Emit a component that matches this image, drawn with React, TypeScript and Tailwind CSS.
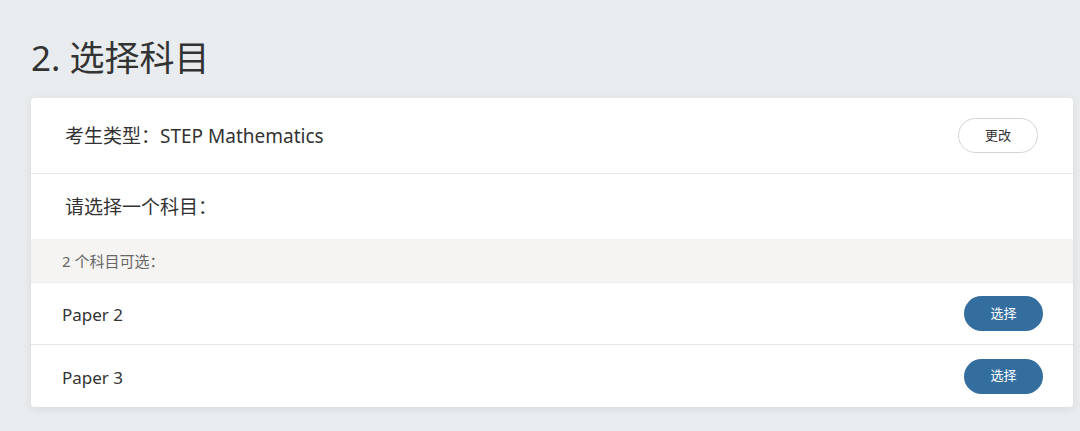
import React from "react";

const papers = ["Paper 2", "Paper 3"];

const App = () => {
  return (
    <div
      className="min-h-screen w-full bg-[#e9ecee] pl-[31px] pr-[7px] pt-[34px] text-[#333]"
      style={{ fontFamily: '"Noto Sans", "Noto Sans CJK SC", sans-serif' }}
    >
      <h1 className="text-[35px] leading-[48px] font-normal text-[#333] mb-[16px]">2. 选择科目</h1>

      <div className="bg-white rounded-[4px] shadow-[0_2px_8px_rgba(0,0,0,0.08)] overflow-hidden">
        <div className="flex items-center justify-between h-[76px] pl-[34px] pr-[35px] border-b border-[#e6eaec]">
          <span className="text-[19px] pt-[2px]">考生类型：STEP Mathematics</span>
          <button className="w-[80px] h-[35px] rounded-full border border-[#d4d4d4] bg-white text-[13px] text-[#333]">
            更改
          </button>
        </div>

        <div className="flex items-center h-[65px] pl-[34px]">
          <span className="text-[19px] pt-[2px]">请选择一个科目：</span>
        </div>

        <div className="flex items-center h-[44px] pl-[31px] bg-[#f5f4f2] border-b border-[#eceeef]">
          <span className="text-[15px] text-[#666] pt-[2px]">2 个科目可选：</span>
        </div>

        {papers.map((p, i) => (
          <div
            key={p}
            className={`flex items-center justify-between h-[62px] pl-[31px] pr-[30px] ${
              i < papers.length - 1 ? "border-b border-[#e3e7e9]" : ""
            }`}
          >
            <span className="text-[17px] pt-[3px]">{p}</span>
            <button className="w-[79px] h-[35px] rounded-full bg-[#346e9f] text-white text-[13px]">选择</button>
          </div>
        ))}
      </div>
    </div>
  );
};

export default App;
